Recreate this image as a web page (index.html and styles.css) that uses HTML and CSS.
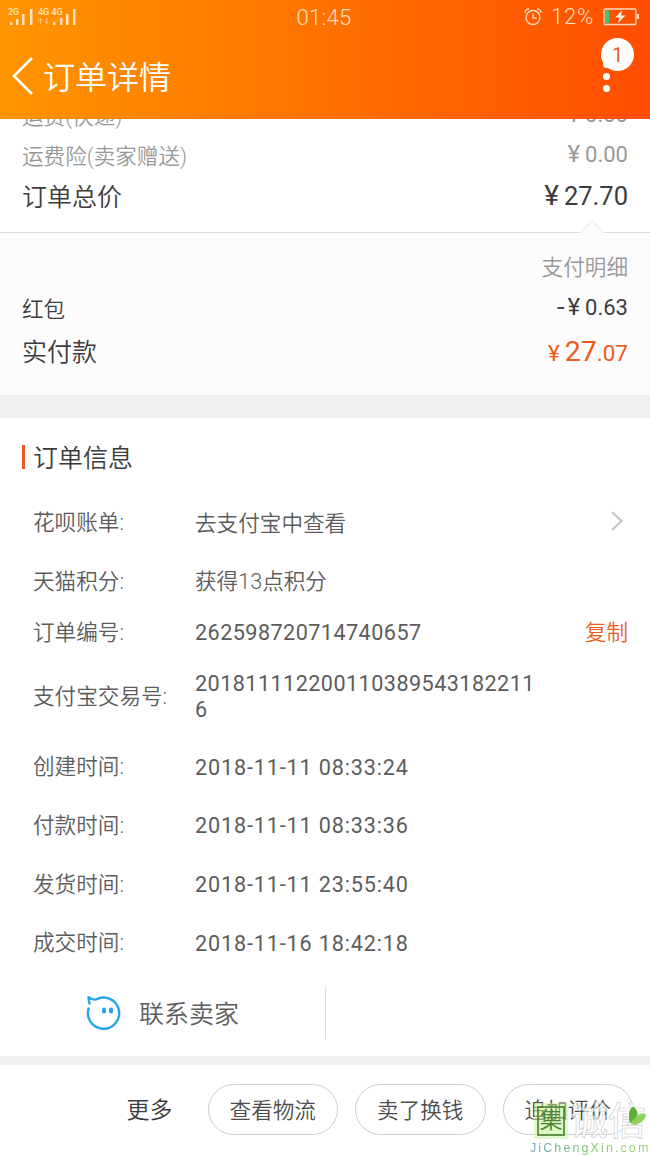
FILE: index.html
```html
<!DOCTYPE html>
<html lang="zh-CN">
<head>
    <meta charset="UTF-8">
    <meta name="viewport" content="width=device-width, initial-scale=1.0">
    <title>订单详情</title>
    <link rel="stylesheet" href="styles.css">
</head>
<body>
    <header class="header">
        <div class="status-bar">
            <svg class="signal" width="70" height="20" viewBox="0 0 70 20">
                <g fill="#ffe3bf">
                    <rect x="2" y="14" width="2.5" height="3"/>
                    <rect x="8" y="11" width="2.5" height="6"/>
                    <rect x="14" y="6" width="2.5" height="11"/>
                    <rect x="22" y="1" width="2.5" height="16"/>
                    <rect x="45" y="14" width="2.5" height="3"/>
                    <rect x="52" y="10" width="2.5" height="7"/>
                    <rect x="58" y="6" width="2.5" height="11"/>
                    <rect x="65" y="1" width="2.5" height="16"/>
                    <text x="0" y="7" class="net">2G</text>
                    <text x="30" y="7" class="net">4G</text>
                    <text x="43.500" y="7" class="net">4G</text>
                </g>
                <path d="M32.500 10v6M30.500 12.500l2-2 2 2M38.500 10v6M36.500 13.500l2 2 2-2" fill="none" stroke="#ffc27c" stroke-width="1"/>
            </svg>
            <span class="clock">01:45</span>
            <div class="status-right">
                <svg width="18" height="18" viewBox="0 0 18 18" fill="none" stroke="#ffdcc0" stroke-width="1.300">
                    <circle cx="9" cy="9.500" r="7"/>
                    <path d="M9 5v5h3.500M1 5C1 2.500 2.500 1 5 1M17 5c0-2.500-1.500-4-4-4"/>
                </svg>
                <span class="percent">12%</span>
                <svg width="37" height="18" viewBox="0 0 37 18">
                    <rect x="1" y="1" width="32" height="15.500" rx="1" fill="none" stroke="#ffdcc0" stroke-width="1.300"/>
                    <rect x="2" y="2.500" width="4" height="12.500" fill="#3cc878"/>
                    <rect x="34" y="6" width="2" height="5" fill="#ffdcc0"/>
                    <path d="M19 2.500l-7 7h4.500l-1.500 5.500 7.500-7.500h-4.500z" fill="#fff0e0"/>
                </svg>
            </div>
        </div>
        <div class="title-bar">
            <svg class="back" width="22" height="40" viewBox="0 0 22 40">
                <path d="M20 2L2 20l18 18" fill="none" stroke="#fff" stroke-width="2.600"/>
            </svg>
            <h1 class="title">订单详情</h1>
            <div class="menu">
                <i></i><i></i><i></i>
                <span class="badge">1</span>
            </div>
        </div>
    </header>

    <section class="summary">
        <div class="row muted">
            <span>运费(快递)</span>
            <span class="price"><b class="yen">¥</b>0.00</span>
        </div>
        <div class="row muted">
            <span>运费险(卖家赠送)</span>
            <span class="price"><b class="yen">¥</b>0.00</span>
        </div>
        <div class="row total">
            <span>订单总价</span>
            <span class="price"><b class="yen">¥</b>27.70</span>
        </div>
    </section>

    <section class="payment">
        <svg class="notch" width="24" height="14" viewBox="0 0 24 14">
            <path d="M0 14L12 1.500 24 14z" fill="#fcfcfc"/>
            <path d="M0 13.500h.500L12 1.500l11.500 12h.500" fill="none" stroke="#dcdcdc"/>
        </svg>
        <div class="row muted">
            <span></span>
            <span>支付明细</span>
        </div>
        <div class="row">
            <span>红包</span>
            <span class="price"><b class="minus">-</b><b class="yen">¥</b>0.63</span>
        </div>
        <div class="row total">
            <span>实付款</span>
            <span class="price paid"><b class="yen">¥</b><big>27</big>.07</span>
        </div>
    </section>

    <section class="info">
        <h2 class="info-title">订单信息</h2>
        <dl class="info-row">
            <dt>花呗账单:</dt>
            <dd>去支付宝中查看</dd>
            <svg class="arrow" width="14" height="22" viewBox="0 0 14 22">
                <path d="M2 2l9.500 9L2 20" fill="none" stroke="#c4c4c4" stroke-width="2"/>
            </svg>
        </dl>
        <dl class="info-row">
            <dt>天猫积分:</dt>
            <dd>获得13点积分</dd>
        </dl>
        <dl class="info-row order-no">
            <dt>订单编号:</dt>
            <dd class="digits">262598720714740657</dd>
            <a class="copy">复制</a>
        </dl>
        <dl class="info-row trade-no">
            <dt>支付宝交易号:</dt>
            <dd class="digits">2018111122001103895431822116</dd>
        </dl>
        <dl class="info-row">
            <dt>创建时间:</dt>
            <dd class="time">2018-11-11 08:33:24</dd>
        </dl>
        <dl class="info-row">
            <dt>付款时间:</dt>
            <dd class="time">2018-11-11 08:33:36</dd>
        </dl>
        <dl class="info-row">
            <dt>发货时间:</dt>
            <dd class="time">2018-11-11 23:55:40</dd>
        </dl>
        <dl class="info-row">
            <dt>成交时间:</dt>
            <dd class="time">2018-11-16 18:42:18</dd>
        </dl>
    </section>

    <div class="contact">
        <div class="seller">
            <svg width="36" height="36" viewBox="0 0 36 36">
                <path d="M3 12.500A15.600 15.600 0 1 0 10 4.500C7 5 4.500 4 2.500 2.200c0 3 .500 5 1.500 7.300M10 4.500C12.500 3 15 2.400 18 2.400" fill="none" stroke="#29a5e3" stroke-width="2.400" stroke-linejoin="round"/>
                <rect x="16" y="12.500" width="4" height="6" rx="2" fill="#29a5e3"/>
                <rect x="23" y="12.500" width="4" height="6" rx="2" fill="#29a5e3"/>
            </svg>
            <span>联系卖家</span>
        </div>
    </div>

    <footer class="actions">
        <span class="more">更多</span>
        <a class="btn">查看物流</a>
        <a class="btn">卖了换钱</a>
        <a class="btn">追加评价</a>
        <div class="watermark">
            <div class="mark-logo">
                <span class="seal">集</span>
                <span class="outline">诚信</span>
            </div>
            <div class="mark-url">JiChengXin.com</div>
            <svg class="leaf" width="18" height="20" viewBox="0 0 18 20">
                <path d="M1 16C-1 8 0 2 4 0c4 2 5 6 4 9 3-3 6-3 9-2 0 5-5 10-12 11z" fill="#8fd060"/>
                <path d="M1 16C-1 8 0 2 4 0c4 2 5 6 4 9z" fill="#5cad3c"/>
            </svg>
        </div>
    </footer>
</body>
</html>
```

FILE: styles.css
```css
* {
    box-sizing: border-box;
}

body {
    margin: 0;
    height: 1155px;
    overflow: hidden;
    background: #fff;
    color: #3c3c3c;
    font-family: Roboto, "Noto Sans CJK SC", sans-serif;
    font-size: 21.6px;
    font-weight: 350;
    line-height: 26px;
}

b, h1, h2 {
    font-weight: inherit;
}

/* header */
.header {
    position: relative;
    z-index: 1;
    height: 119px;
    background: linear-gradient(to right, #ff9500, #ff4d00);
    color: #fff;
}

.status-bar {
    display: grid;
    grid-template-columns: 1fr auto 1fr;
    align-items: center;
    height: 34px;
    padding: 0 10px 0 8px;
    color: #ffdfbf;
}

.signal {
    margin-top: 2px;
}

.net {
    font-size: 9px;
    font-weight: 500;
}

.clock {
    padding-top: 2px;
    font-size: 22px;
    letter-spacing: 0.3px;
}

.status-right {
    display: flex;
    align-items: center;
    justify-content: flex-end;
    gap: 9px;
}

.percent {
    font-size: 22px;
    letter-spacing: 0.8px;
}

.title-bar {
    display: flex;
    align-items: center;
    height: 85px;
    padding: 0 36px 0 12px;
}

.back {
    margin-top: -1px;
}

.title {
    flex: 1;
    margin: 0 0 0 9px;
    padding-top: 2px;
    font-size: 32px;
    line-height: 40px;
}

.menu {
    position: relative;
    display: flex;
    flex-direction: column;
    gap: 5px;
    width: 15px;
    align-items: center;
}

.menu i {
    width: 7px;
    height: 7px;
    border-radius: 50%;
    background: #fff;
}

.badge {
    position: absolute;
    left: 2px;
    bottom: 21px;
    width: 33px;
    height: 33px;
    border-radius: 50%;
    background: #fff;
    color: #e8602c;
    font-size: 20px;
    font-weight: 400;
    line-height: 35px;
    text-align: center;
}

/* amounts */
.summary {
    height: 135px;
    margin-top: -22px;
    padding: 0 22px;
}

.row {
    display: flex;
    align-items: center;
    justify-content: space-between;
    height: 40px;
}

.muted {
    color: #999;
}

.total {
    padding-top: 2px;
    font-size: 25px;
}

.price {
    margin-top: -5px;
    font-size: 22px;
    font-weight: 400;
}

.total .price {
    font-size: 25.5px;
}

.yen {
    margin-right: 5px;
    font-size: 1.1em;
}

.minus {
    margin-right: 2px;
    font-family: "Noto Sans CJK SC", sans-serif;
    font-size: 26px;
    line-height: 20px;
}

.payment {
    position: relative;
    height: 186px;
    padding: 14px 22px 0;
    border-top: 1px solid #ddd;
    border-bottom: 23px solid #f0f0f0;
    background: #fcfcfc;
}

.payment .row {
    height: 42px;
}

.notch {
    position: absolute;
    top: -14px;
    right: 46px;
}

.total .paid {
    margin-top: -2px;
    color: #ee5a1c;
    font-size: 22.5px;
}

.paid big {
    font-size: 28.5px;
}

.paid .yen {
    font-size: 22.5px;
}

/* order info */
.info {
    padding: 0 22px;
    color: #5c5c5c;
}

.info-title {
    display: flex;
    align-items: center;
    gap: 8px;
    height: 75px;
    margin: 0;
    padding-top: 6px;
    color: #3c3c3c;
    font-size: 25px;
}

.info-title::before {
    content: "";
    width: 3px;
    height: 24px;
    margin-top: -3px;
    background: #ee5a1c;
}

.info-row {
    display: flex;
    align-items: center;
    height: 58.6px;
    margin: 0;
    padding: 2px 0 0 11px;
}

.info-row dt {
    width: 162px;
}

.info-row dd {
    width: 345px;
    margin: 0;
    line-height: 25.5px;
    word-break: break-all;
}

.info-row .digits {
    font-weight: 400;
    letter-spacing: 0.45px;
}

.info-row .time {
    font-weight: 400;
    letter-spacing: 0.85px;
}

.order-no {
    height: 44px;
}

.trade-no {
    height: 83px;
}

.arrow,
.copy {
    margin-left: auto;
}

.arrow {
    margin-top: -4px;
    margin-right: 4px;
}

.copy {
    color: #ee5a1c;
}

/* contact seller */
.contact {
    display: flex;
    align-items: center;
    height: 93px;
    padding-bottom: 2px;
    border-bottom: 9px solid #f0f0f0;
}

.seller {
    display: flex;
    align-items: center;
    gap: 17px;
    width: 326px;
    height: 52px;
    padding-left: 86px;
    border-right: 1px solid #ddd;
    color: #5c5c5c;
    font-size: 25px;
}

.seller span {
    padding-top: 4px;
}

/* bottom actions */
.actions {
    position: relative;
    display: flex;
    align-items: center;
    justify-content: flex-end;
    gap: 17px;
    height: 90px;
    padding-right: 17px;
}

.more {
    margin-right: 18px;
    padding-top: 3px;
    font-size: 23px;
}

.btn {
    width: 130.5px;
    height: 51px;
    border: 1px solid #ccc;
    border-radius: 26px;
    color: #4c4c4c;
    line-height: 52px;
    text-align: center;
}

.watermark {
    position: absolute;
    right: 0;
    bottom: 0;
    width: 120px;
    height: 54px;
}

.mark-logo {
    display: flex;
    align-items: center;
    gap: 5px;
    padding-left: 7px;
    height: 41px;
}

.seal {
    width: 28px;
    height: 30px;
    border: 2px solid rgba(70, 125, 50, 0.8);
    outline: 3px solid rgba(200, 245, 150, 0.5);
    background: rgba(190, 240, 140, 0.5);
    color: #4c8539;
    font-size: 23px;
    line-height: 25px;
    text-align: center;
}

.outline {
    color: rgba(255, 255, 255, 0.65);
    font-size: 38px;
    font-weight: 500;
    line-height: 34px;
    -webkit-text-stroke: 0.6px #c8c8c8;
}

.mark-url {
    font-family: "Liberation Sans", Arial, sans-serif;
    font-size: 12.5px;
    font-weight: 400;
    line-height: 13px;
    letter-spacing: 2.1px;
    white-space: nowrap;
    background: linear-gradient(to right, #6aa6c0, #7cc86c 50%, #9ada70);
    -webkit-background-clip: text;
    -webkit-text-fill-color: transparent;
}

.leaf {
    position: absolute;
    top: 6px;
    right: 3px;
}
```
